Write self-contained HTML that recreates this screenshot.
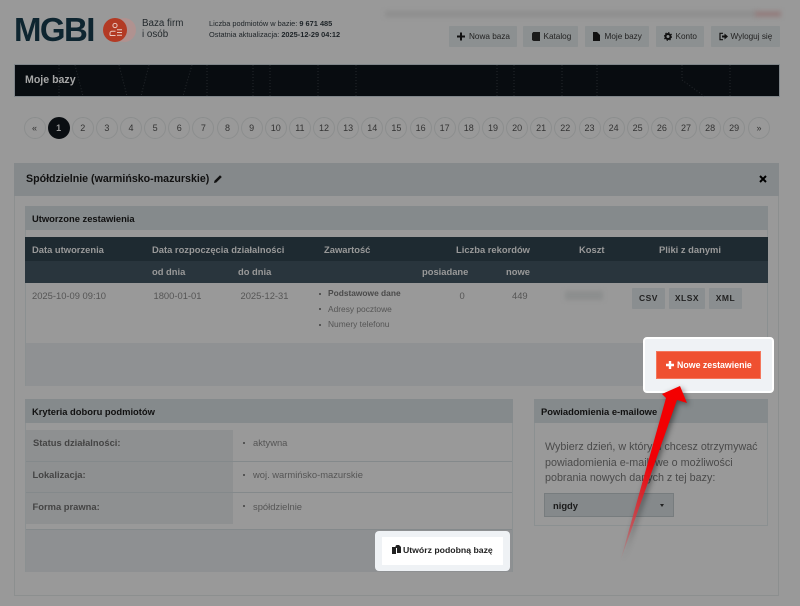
<!DOCTYPE html>
<html lang="pl"><head><meta charset="utf-8"><title>Moje bazy</title>
<style>
html,body{margin:0;padding:0}
body{width:800px;height:606px;position:relative;overflow:hidden;background:#999;font-family:"Liberation Sans",sans-serif;color:#3c3c3c}
.a{position:absolute;white-space:nowrap}
.box{position:absolute;box-sizing:border-box}
.btn{position:absolute;top:26px;height:21px;background:#8c9091;border-radius:1px}
.bt{position:absolute;top:31px;font-size:8.200px;line-height:11px;color:#222;white-space:nowrap}
.bi{position:absolute;top:32px}
.p{position:absolute;top:117px;width:22px;height:22px;border-radius:50%;border:1px solid #8c8e8e;box-sizing:border-box;text-align:center;line-height:20px;font-size:9px;color:#333}
.h{background:#858a8c;color:#111;font-weight:bold;font-size:9.400px;line-height:25px;padding-left:7px;box-sizing:border-box}
.th{color:#999;font-weight:bold;font-size:9.400px;position:absolute;white-space:nowrap}
.td{font-size:9.400px;color:#555;position:absolute;white-space:nowrap}
.f{position:absolute;top:288px;height:21px;background:#8a8e90;color:#222;font-weight:bold;font-size:8.500px;line-height:21px;text-align:center;letter-spacing:.5px;border-radius:1px}
.l{font-size:8.400px;color:#555;position:absolute;white-space:nowrap}
.d{position:absolute;width:2px;height:2px;background:#555}
.k{font-size:9.400px;font-weight:bold;color:#444;position:absolute;white-space:nowrap}
</style></head><body>

<!-- logo -->
<div class="a" style="left:14px;top:12px;font-size:33px;font-weight:bold;color:#0e2530;line-height:35px;letter-spacing:-1.600px">MGBI</div>
<svg class="a" style="left:102px;top:16px" width="36" height="28" viewBox="0 0 36 28">
<circle cx="22" cy="14" r="12" fill="#b09290"/>
<circle cx="13" cy="14" r="12" fill="#b33a24"/>
<circle cx="13" cy="9.500" r="2.100" fill="none" stroke="#e8c8c0" stroke-width="1"/>
<path d="M8 19.500v-2.200a2 2 0 0 1 2-2h3.500M15 13.800h5M15 16.500h5M15 19.200h5M8 19.500h5.500" fill="none" stroke="#e8c8c0" stroke-width="1"/>
</svg>
<div class="a" style="left:142px;top:18px;font-size:9.800px;line-height:11px;color:#23292d">Baza firm<br>i osób</div>
<div class="a" style="left:209px;top:18px;font-size:7.400px;line-height:11px;color:#1d2327">Liczba podmiotów w bazie: <b>9 671 485</b><br>Ostatnia aktualizacja: <b>2025-12-29 04:12</b></div>

<!-- blurred top line -->
<div class="a" style="left:385px;top:11px;width:372px;height:6px;background:#8e8e8e;filter:blur(2px)"></div>
<div class="a" style="left:755px;top:11px;width:26px;height:6px;background:#937e7e;filter:blur(2px)"></div>

<!-- nav -->
<div class="btn" style="left:449px;width:68px"></div>
<div class="btn" style="left:523px;width:55px"></div>
<div class="btn" style="left:585px;width:64px"></div>
<div class="btn" style="left:656px;width:48px"></div>
<div class="btn" style="left:711px;width:69px"></div>
<svg class="bi" style="left:457px" width="8" height="9" viewBox="0 0 8 9"><path d="M4 .5v8M0 4.500h8" stroke="#111" stroke-width="2"/></svg>
<svg class="bi" style="left:532px" width="8" height="9" viewBox="0 0 8 9"><path d="M0 1.500 1.200 0H8v9H1.500L0 8z" fill="#1a1a1a"/></svg>
<svg class="bi" style="left:593px" width="7" height="9" viewBox="0 0 7 9"><path d="M0 0h4l3 3v6H0z" fill="#111"/></svg>
<svg class="bi" style="left:664px" width="8" height="9" viewBox="0 0 8 9"><circle cx="4" cy="4.500" r="2.500" fill="none" stroke="#111" stroke-width="2"/><circle cx="4" cy="4.500" r="3.900" fill="none" stroke="#111" stroke-width=".9" stroke-dasharray="1.400 1.660"/></svg>
<svg class="bi" style="left:719px" width="9" height="9" viewBox="0 0 9 9"><path d="M4 1.300H1v6.400h3" fill="none" stroke="#111" stroke-width="1.200"/><path d="M3 3.500h2.500V1.500L9 4.500 5.500 7.500v-2H3z" fill="#111"/></svg>
<div class="bt" style="left:469px">Nowa baza</div>
<div class="bt" style="left:543.500px">Katalog</div>
<div class="bt" style="left:604.500px">Moje bazy</div>
<div class="bt" style="left:675.500px">Konto</div>
<div class="bt" style="left:730.500px">Wyloguj się</div>

<!-- title bar -->
<div class="box" style="left:14px;top:64px;width:766px;height:33px;background:#080c10;border:1px solid #80868a"></div>
<svg class="a" style="left:0;top:0" width="800" height="110" stroke="#24282c" stroke-dasharray="1 2" fill="none">
<path d="M59 65v31M75 65l8 31M119 65l8 31M149 65l-8 31M192 65l-9 31M207 65v31M253 65v31M270 65v31M318 65v31M356 65v31M497 65v31M514 65v31M562 65v31M597 65v31M682 65v15l22 16M730 65v31"/>
</svg>
<div class="a" style="left:25px;top:73px;font-size:10.600px;font-weight:bold;color:#a6a6a6;line-height:14px">Moje bazy</div>

<!-- pagination -->
<div class="p" style="left:23.500px">«</div>
<div class="p" style="left:47.700px;background:#0a0e12;border-color:#0a0e12;color:#999;font-weight:bold">1</div>
<div class="p" style="left:71.800px">2</div><div class="p" style="left:95.900px">3</div><div class="p" style="left:120px">4</div><div class="p" style="left:144.100px">5</div><div class="p" style="left:168.300px">6</div><div class="p" style="left:192.400px">7</div><div class="p" style="left:216.500px">8</div><div class="p" style="left:240.700px">9</div><div class="p" style="left:264.800px">10</div><div class="p" style="left:288.900px">11</div><div class="p" style="left:313px">12</div><div class="p" style="left:337.200px">13</div><div class="p" style="left:361.300px">14</div><div class="p" style="left:385.400px">15</div><div class="p" style="left:409.600px">16</div><div class="p" style="left:433.700px">17</div><div class="p" style="left:457.800px">18</div><div class="p" style="left:482px">19</div><div class="p" style="left:506.100px">20</div><div class="p" style="left:530.200px">21</div><div class="p" style="left:554.300px">22</div><div class="p" style="left:578.500px">23</div><div class="p" style="left:602.600px">24</div><div class="p" style="left:626.700px">25</div><div class="p" style="left:650.900px">26</div><div class="p" style="left:675px">27</div><div class="p" style="left:699.100px">28</div><div class="p" style="left:723.200px">29</div>
<div class="p" style="left:748px">»</div>

<!-- main panel -->
<div class="box" style="left:14px;top:163px;width:765px;height:433px;border:1px solid #8c8f8f"></div>
<div class="box" style="left:14px;top:163px;width:765px;height:33px;background:#85898b"></div>
<div class="a" style="left:26px;top:172px;font-size:10.650px;font-weight:bold;color:#111;line-height:14px">Spółdzielnie (warmińsko-mazurskie)</div>
<svg class="a" style="left:213px;top:174px" width="10" height="10" viewBox="0 0 10 10"><path d="M1 9l.5-2.300L7 1.200 8.800 3 3.300 8.500z" fill="#111"/></svg>
<svg class="a" style="left:759px;top:175px" width="8" height="8" viewBox="0 0 8 8"><path d="M1 1l6 6M7 1l-6 6" stroke="#000" stroke-width="2"/></svg>

<!-- created sets -->
<div class="box" style="left:25px;top:206px;width:743px;height:180px;border:1px solid #8b9091"></div>
<div class="box h" style="left:25px;top:206px;width:743px;height:24px">Utworzone zestawienia</div>
<div class="box" style="left:25px;top:237px;width:743px;height:24px;background:#1e2a31"></div>
<div class="box" style="left:25px;top:261px;width:743px;height:22px;background:#29353d"></div>
<div class="box" style="left:26px;top:343px;width:742px;height:43px;background:#8f9193"></div>
<div class="th" style="left:32px;top:244px">Data utworzenia</div>
<div class="th" style="left:152px;top:244px">Data rozpoczęcia działalności</div>
<div class="th" style="left:324px;top:244px">Zawartość</div>
<div class="th" style="left:456px;top:244px">Liczba rekordów</div>
<div class="th" style="left:579px;top:244px">Koszt</div>
<div class="th" style="left:659px;top:244px">Pliki z danymi</div>
<div class="th" style="left:152px;top:266px">od dnia</div>
<div class="th" style="left:238px;top:266px">do dnia</div>
<div class="th" style="left:422px;top:266px">posiadane</div>
<div class="th" style="left:506px;top:266px">nowe</div>
<div class="td" style="left:32px;top:290px">2025-10-09 09:10</div>
<div class="td" style="left:153.500px;top:290px">1800-01-01</div>
<div class="td" style="left:240.500px;top:290px">2025-12-31</div>
<div class="td" style="left:459.500px;top:290px">0</div>
<div class="td" style="left:512px;top:290px">449</div>
<div class="a" style="left:565px;top:291px;width:38px;height:9px;background:#8c8e8e;filter:blur(2px)"></div>
<div class="d" style="left:319px;top:293px"></div>
<div class="d" style="left:319px;top:308px"></div>
<div class="d" style="left:319px;top:324px"></div>
<div class="l" style="left:328px;top:288px;font-weight:bold;color:#4a4a4a">Podstawowe dane</div>
<div class="l" style="left:328px;top:304px">Adresy pocztowe</div>
<div class="l" style="left:328px;top:319px">Numery telefonu</div>
<div class="f" style="left:632px;width:33px">CSV</div>
<div class="f" style="left:669px;width:36px">XLSX</div>
<div class="f" style="left:709px;width:33px">XML</div>

<!-- criteria -->
<div class="box" style="left:25px;top:399px;width:488px;height:173px;border:1px solid #8b9091"></div>
<div class="box h" style="left:25px;top:399px;width:488px;height:24px">Kryteria doboru podmiotów</div>
<div class="box" style="left:26px;top:430px;width:207px;height:94px;background:#8e9091"></div>
<div class="box" style="left:26px;top:461px;width:486px;height:1px;background:#84898b"></div>
<div class="box" style="left:26px;top:492px;width:486px;height:1px;background:#84898b"></div>
<div class="box" style="left:26px;top:529px;width:486px;height:43px;background:#8e9092;border-top:1px solid #84898b"></div>
<div class="k" style="left:33px;top:437px">Status działalności:</div>
<div class="k" style="left:32.500px;top:469px">Lokalizacja:</div>
<div class="k" style="left:32.500px;top:500.500px">Forma prawna:</div>
<div class="d" style="left:243px;top:442px"></div>
<div class="d" style="left:243px;top:474px"></div>
<div class="d" style="left:243px;top:505px"></div>
<div class="td" style="left:253px;top:437px">aktywna</div>
<div class="td" style="left:253px;top:469px">woj. warmińsko-mazurskie</div>
<div class="td" style="left:253px;top:500.500px">spółdzielnie</div>

<!-- notifications -->
<div class="box" style="left:534px;top:399px;width:234px;height:127px;border:1px solid #8b9091"></div>
<div class="box h" style="left:534px;top:399px;width:234px;height:24px">Powiadomienia e-mailowe</div>
<div class="a" style="left:545px;top:440px;font-size:10.750px;line-height:15.500px;color:#4a4a4a">Wybierz dzień, w którym chcesz otrzymywać<br>powiadomienia e-mailowe o możliwości<br>pobrania nowych danych z tej bazy:</div>
<div class="box" style="left:544px;top:493px;width:130px;height:24px;background:#85898b;border:1px solid #777c7e;color:#1a1a1a;font-weight:bold;font-size:9.400px;line-height:23px;padding-left:8px">nigdy</div>
<div class="a" style="left:659.500px;top:504px;width:0;height:0;border-left:2.500px solid transparent;border-right:2.500px solid transparent;border-top:3px solid #222"></div>

<!-- highlights -->
<div class="box" style="left:643px;top:337px;width:131px;height:56px;background:#eff2f5;border:2px solid #fff;border-radius:4px"></div>
<div class="box" style="left:656px;top:351px;width:105px;height:28px;background:#ef5030;border:1px solid #f4775c;color:#fff;font-weight:bold;font-size:8.800px;line-height:26px;white-space:nowrap;padding-left:9px"><svg width="8" height="8" viewBox="0 0 8 8" style="vertical-align:-1px;margin-right:3px"><path d="M4 0v8M0 4h8" stroke="#fff" stroke-width="2.400"/></svg>Nowe zestawienie</div>
<div class="box" style="left:375px;top:531px;width:135px;height:40px;background:#eff2f5;border-radius:4px"></div>
<div class="box" style="left:382px;top:537px;width:121px;height:28px;background:#fff;color:#222;font-weight:bold;font-size:8.700px;line-height:26px;white-space:nowrap;padding-left:10px"><svg width="9" height="9" viewBox="0 0 9 9" style="vertical-align:-1px;margin-right:2px"><path d="M0 2h4v7H0z" fill="#222"/><path d="M4.500 0h2.500l2 2v6H5V3H3.500V1z" fill="#222"/></svg>Utwórz podobną bazę</div>

<!-- arrow -->
<svg class="a" style="left:600px;top:375px;filter:drop-shadow(2px 2px 3px rgba(0,0,0,.45))" width="100" height="195" viewBox="600 375 100 195">
<defs><linearGradient id="g" gradientUnits="userSpaceOnUse" x1="680" y1="386" x2="620" y2="562"><stop offset="0" stop-color="#f40000"/><stop offset=".45" stop-color="#f00006"/><stop offset=".8" stop-color="#d0454c" stop-opacity=".8"/><stop offset="1" stop-color="#b87074" stop-opacity=".1"/></linearGradient></defs>
<path d="M680 386 687 403 677 400 620 562 666 398 662 394z" fill="url(#g)"/>
</svg>
</body></html>
